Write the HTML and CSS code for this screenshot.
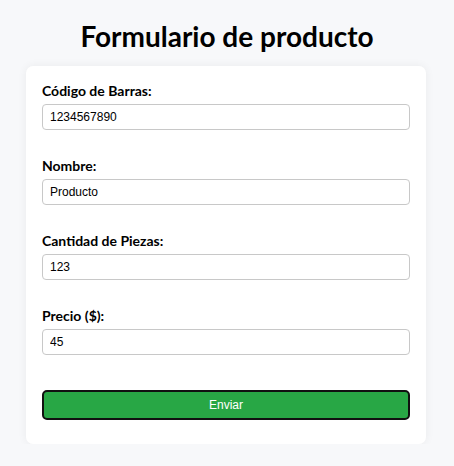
FILE: index.html
```html
<!DOCTYPE html>
<html lang="es">
<head>
<meta charset="utf-8">
<title>Formulario de producto</title>
<link rel="stylesheet" href="styles.css">
</head>
<body>
<h1 class="title">Formulario de producto</h1>
<form class="card">
  <div class="group">
    <label class="label" for="codigo">Código de Barras:</label>
    <input class="input" id="codigo" type="text" value="1234567890">
  </div>
  <div class="group">
    <label class="label" for="nombre">Nombre:</label>
    <input class="input" id="nombre" type="text" value="Producto">
  </div>
  <div class="group">
    <label class="label" for="cantidad">Cantidad de Piezas:</label>
    <input class="input" id="cantidad" type="text" value="123">
  </div>
  <div class="group">
    <label class="label" for="precio">Precio ($):</label>
    <input class="input" id="precio" type="text" value="45">
  </div>
  <button class="submit" type="button">Enviar</button>
</form>
</body>
</html>
```
FILE: styles.css
```css
* { box-sizing: border-box; }
html, body { margin: 0; padding: 0; }
body {
  background: #f7f8fa;
  font-family: Lato, "Open Sans", sans-serif;
  color: #000;
  padding: 18px 26px 0;
}
.title {
  margin: 0 0 12px;
  text-align: center;
  font-size: 28px;
  line-height: 36px;
  font-weight: 700;
}
.card {
  width: 400px;
  background: #fff;
  border-radius: 7px;
  box-shadow: 0 0 10px rgba(0,0,0,0.06);
  padding: 16px 16px 24px;
  display: flex;
  flex-direction: column;
  gap: 27px;
}
.group {
  display: flex;
  flex-direction: column;
  gap: 4px;
}
.label {
  font-size: 14px;
  line-height: 18px;
  font-weight: 700;
}
.input {
  height: 26px;
  border: 1px solid #c8c8c8;
  border-radius: 4px;
  padding: 0 7px;
  font-family: "Liberation Sans", Arial, sans-serif;
  font-size: 12px;
  color: #000;
  background: #fff;
}
.submit {
  margin-top: 8px;
  height: 30px;
  background: #28a745;
  border: 2px solid #111;
  border-radius: 5px;
  color: #fff;
  font-family: "Liberation Sans", Arial, sans-serif;
  font-size: 12px;
}
```
